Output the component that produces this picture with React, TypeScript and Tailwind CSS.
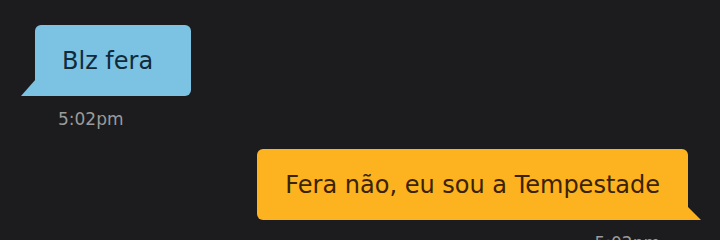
export default function App() {
  return (
    <div
      className="w-[720px] h-[240px] overflow-hidden bg-[#1c1c1e] pt-[25px]"
      style={{ fontFamily: "'DejaVu Sans', 'Open Sans', sans-serif" }}
    >
      <div className="flex flex-col items-start pl-[35px]">
        <div className="relative flex h-[71px] items-center rounded-[6px] rounded-bl-none bg-[#7cc3e3] pl-[27px] pr-[38px] text-[24px] text-[#102a3c]">
          <span>Blz fera</span>
          <svg
            className="absolute bottom-0 left-[-14px] h-[17px] w-[15px]"
            viewBox="0 0 15 17"
          >
            <polygon points="15,0 15,17 0,17" fill="#7cc3e3" />
          </svg>
        </div>
        <div className="ml-[23px] mt-[11px] h-[24px] text-[17px] leading-[24px] text-[#9b9b9b]">
          5:02pm
        </div>
      </div>
      <div className="mt-[18px] flex flex-col items-end pr-[32px]">
        <div className="relative flex h-[71px] items-center rounded-[6px] rounded-br-none bg-[#fdb21f] px-[28px] text-[24px] text-[#3a2300]">
          <span>Fera não, eu sou a Tempestade</span>
          <svg
            className="absolute bottom-0 right-[-13px] h-[14px] w-[14px]"
            viewBox="0 0 14 14"
          >
            <polygon points="0,0 14,14 0,14" fill="#fdb21f" />
          </svg>
        </div>
        <div className="mr-[28px] mt-[11px] h-[24px] text-[17px] leading-[24px] text-[#9b9b9b]">
          5:02pm
        </div>
      </div>
    </div>
  );
}
